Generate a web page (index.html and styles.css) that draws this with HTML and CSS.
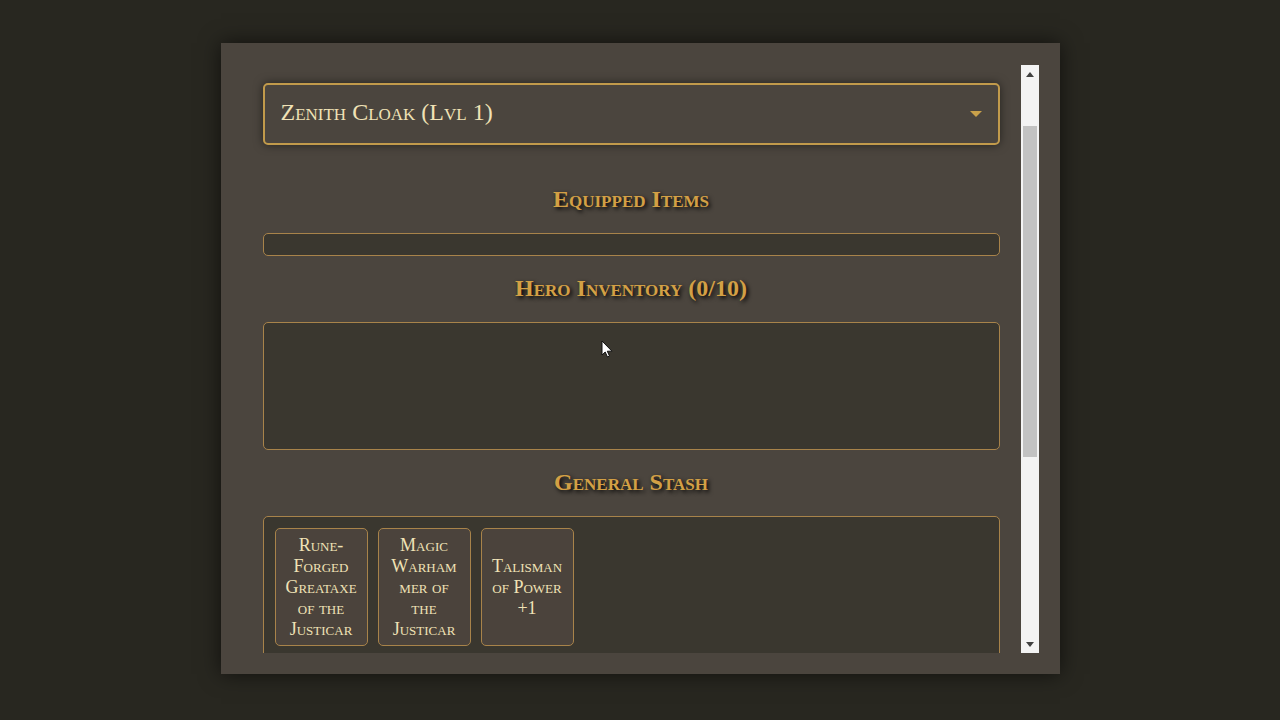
FILE: index.html
```
<!DOCTYPE html>
<html lang="en">
<head>
    <meta charset="UTF-8">
    <title>Hero Inventory</title>
    <link rel="stylesheet" href="styles.css">
</head>
<body>
    <main class="panel">
        <div class="panel-content">
            <div class="hero-select">
                <select id="hero" aria-label="Hero">
                    <option>Zenith Cloak (Lvl 1)</option>
                </select>
                <svg class="hero-arrow" width="12" height="6" viewBox="0 0 12 6" aria-hidden="true">
                    <path d="M0 0h12L6 6z" fill="#c9a14a"/>
                </svg>
            </div>

            <h2>Equipped Items</h2>
            <div class="item-grid"></div>

            <h2>Hero Inventory (0/10)</h2>
            <div class="item-grid inventory"></div>

            <h2>General Stash</h2>
            <div class="item-grid stash">
                <button class="item">Rune-<br>Forged<br>Greataxe<br>of the<br>Justicar</button>
                <button class="item">Magic<br>Warham<wbr>mer of<br>the<br>Justicar</button>
                <button class="item">Talisman<br>of Power<br>+1</button>
            </div>
        </div>

        <div class="scrollbar">
            <button class="scroll-btn" aria-label="Scroll up">
                <svg width="8" height="5" viewBox="0 0 8 5"><path d="M0 5h8L4 0z" fill="#404040"/></svg>
            </button>
            <div class="scroll-track">
                <div class="scroll-thumb"></div>
            </div>
            <button class="scroll-btn" aria-label="Scroll down">
                <svg width="8" height="5" viewBox="0 0 8 5"><path d="M0 0h8L4 5z" fill="#404040"/></svg>
            </button>
        </div>
    </main>

    <svg class="cursor" width="12" height="19" viewBox="0 0 12 19" aria-hidden="true">
        <path d="M1 1v14l3.200-3 2.300 5 2-1-2.200-4.800H11z" fill="#fff" stroke="#111" stroke-width="1"/>
    </svg>
</body>
</html>
```

FILE: styles.css
```
* {
    box-sizing: border-box;
}

body {
    margin: 0;
    padding: 43px 20px 46px;
    height: 100vh;
    display: flex;
    justify-content: center;
    overflow: hidden;
    background-color: #282720;
    color: #f0e2b6;
    font-family: "Liberation Serif", serif;
    font-variant: small-caps;
}

.panel {
    display: flex;
    width: 100%;
    max-width: 839px;
    padding: 22px 21px 21px 42px;
    background-color: #4b453e;
    box-shadow: 0 0 20px rgba(0, 0, 0, 0.6);
}

.panel-content {
    flex: 1;
    min-width: 0;
    padding-top: 18px;
    padding-right: 21px;
    /* lets the select shadow show on the left */
    margin-left: -12px;
    padding-left: 12px;
    overflow: hidden;
}

.hero-select {
    position: relative;
    margin-bottom: 42px;
}

.hero-select select {
    display: block;
    width: 100%;
    height: 62px;
    padding: 0 16px 4px;
    appearance: none;
    background-color: #4b453e;
    border: 2px solid #c19a4b;
    border-radius: 5px;
    box-shadow: 0 0 10px rgba(0, 0, 0, 0.5);
    color: inherit;
    font-family: inherit;
    font-size: 24px;
    font-variant: small-caps;
}

.hero-arrow {
    position: absolute;
    top: 28px;
    right: 18px;
    pointer-events: none;
}

h2 {
    margin: 20px 0 22px;
    color: #d3a045;
    font-size: 24px;
    line-height: 24px;
    text-align: center;
    text-shadow: 2px 2px 4px #000;
}

.item-grid {
    display: flex;
    flex-wrap: wrap;
    align-content: flex-start;
    gap: 10px;
    padding: 11px 11px 10px;
    background-color: #3a372f;
    border: 1px solid #a8834a;
    border-radius: 5px;
}

.inventory {
    min-height: 128px;
}

.stash {
    min-height: 240px;
}

.item {
    width: 93px;
    height: 118px;
    padding: 0;
    background-color: #4b433c;
    border: 1px solid #a8834a;
    border-radius: 5px;
    color: inherit;
    font-family: inherit;
    font-size: 18px;
    font-variant: small-caps;
    line-height: 21px;
    overflow-wrap: anywhere;
}

.scrollbar {
    display: flex;
    flex-direction: column;
    width: 18px;
    background-color: #f3f3f3;
}

.scroll-btn {
    display: flex;
    align-items: center;
    justify-content: center;
    height: 18px;
    padding: 0;
    border: none;
    background: none;
}

.scroll-track {
    flex: 1;
    padding: 43px 2px 0;
}

.scroll-thumb {
    height: 65%;
    background-color: #c2c2c2;
}

.cursor {
    position: absolute;
    top: 340px;
    left: 601px;
}
```
